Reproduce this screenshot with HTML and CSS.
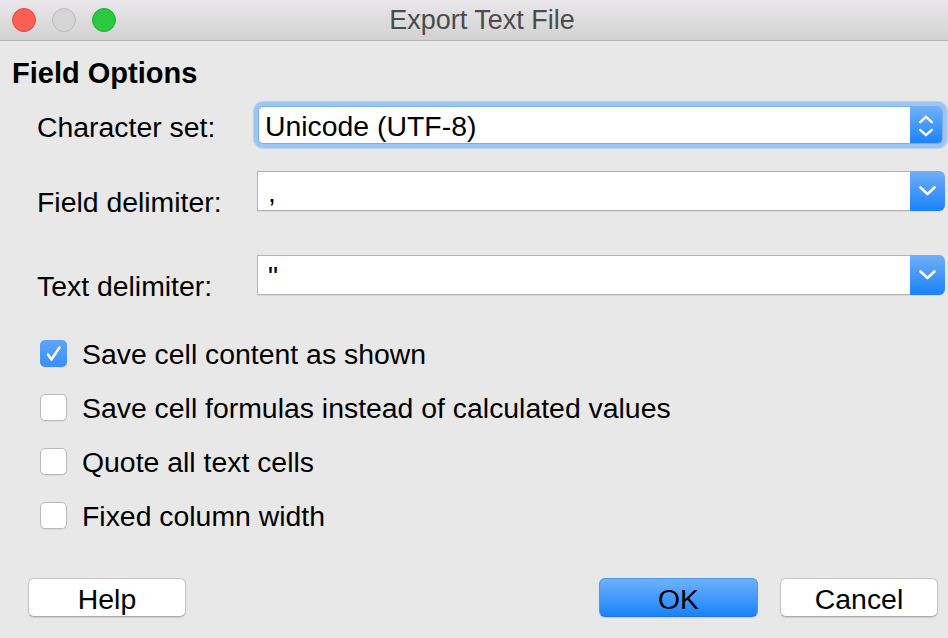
FILE: index.html
```html
<!DOCTYPE html>
<html lang="en">
<head>
<meta charset="utf-8">
<title>Export Text File</title>
<link rel="stylesheet" href="styles.css">
</head>
<body>
<div class="window">
  <header class="titlebar">
    <div class="lights">
      <span class="light close"></span>
      <span class="light min"></span>
      <span class="light zoom"></span>
    </div>
    <div class="title">Export Text File</div>
  </header>

  <main class="dialog">
    <h2 class="section">Field Options</h2>

    <div class="form">
      <div class="row row-charset">
        <label class="label">Character set:</label>
        <div class="select focused">
          <span class="value">Unicode (UTF-8)</span>
          <span class="stepper">
            <svg width="33" height="38" viewBox="0 0 33 38"><path d="M10.5 15 L16.5 9.5 L22.5 15" fill="none" stroke="#fff" stroke-width="2.4" stroke-linecap="round" stroke-linejoin="round"/><path d="M10.5 23 L16.5 28.5 L22.5 23" fill="none" stroke="#fff" stroke-width="2.4" stroke-linecap="round" stroke-linejoin="round"/></svg>
          </span>
        </div>
      </div>

      <div class="row row-combo">
        <label class="label">Field delimiter:</label>
        <div class="combo">
          <span class="value">,</span>
          <span class="arrow">
            <svg width="35" height="40" viewBox="0 0 35 40"><path d="M10.5 16.5 L17.5 23 L24.5 16.5" fill="none" stroke="#fff" stroke-width="2.6" stroke-linecap="round" stroke-linejoin="round"/></svg>
          </span>
        </div>
      </div>

      <div class="row row-combo row-last">
        <label class="label">Text delimiter:</label>
        <div class="combo">
          <span class="value">"</span>
          <span class="arrow">
            <svg width="35" height="40" viewBox="0 0 35 40"><path d="M10.5 16.5 L17.5 23 L24.5 16.5" fill="none" stroke="#fff" stroke-width="2.6" stroke-linecap="round" stroke-linejoin="round"/></svg>
          </span>
        </div>
      </div>
    </div>

    <ul class="checks">
      <li class="check">
        <span class="box checked">
          <svg width="27" height="27" viewBox="0 0 27 27"><path d="M8 14.5 L11.5 19.5 L19.5 7.5" fill="none" stroke="#fff" stroke-width="2.4" stroke-linecap="round" stroke-linejoin="round"/></svg>
        </span>
        <span class="check-text">Save cell content as shown</span>
      </li>
      <li class="check">
        <span class="box"></span>
        <span class="check-text">Save cell formulas instead of calculated values</span>
      </li>
      <li class="check">
        <span class="box"></span>
        <span class="check-text">Quote all text cells</span>
      </li>
      <li class="check">
        <span class="box"></span>
        <span class="check-text">Fixed column width</span>
      </li>
    </ul>

    <footer class="buttons">
      <button class="btn">Help</button>
      <span class="spacer"></span>
      <button class="btn primary">OK</button>
      <button class="btn">Cancel</button>
    </footer>
  </main>
</div>
</body>
</html>
```

FILE: styles.css
```css
* {
  box-sizing: border-box;
}

html, body {
  margin: 0;
  padding: 0;
}

body {
  width: 948px;
  height: 638px;
  overflow: hidden;
  background: #e8e8e8;
  font-family: "Liberation Sans", Arial, Helvetica, sans-serif;
  color: #000;
}

.window {
  display: flex;
  flex-direction: column;
  height: 638px;
}

/* Title bar */
.titlebar {
  position: relative;
  height: 41px;
  flex: 0 0 41px;
  background: linear-gradient(#e9e7e9, #d3d2d3);
  border-bottom: 1px solid #b6b5b6;
  display: flex;
  align-items: center;
  justify-content: center;
}

.lights {
  position: absolute;
  left: 12px;
  top: 8px;
  display: flex;
  gap: 16px;
}

.light {
  width: 24px;
  height: 24px;
  border-radius: 50%;
  display: block;
}

.light.close {
  background: #fd5f57;
  border: 1px solid #e2463f;
}

.light.min {
  background: #d6d5d6;
  border: 1px solid #bdbcbd;
}

.light.zoom {
  background: #2cc840;
  border: 1px solid #1fad2e;
}

.title {
  font-size: 27px;
  line-height: 30px;
  color: #4b4b4b;
  margin-left: 16px;
}

/* Dialog body */
.dialog {
  flex: 1;
  display: flex;
  flex-direction: column;
}

.section {
  margin: 16px 0 0 12px;
  font-size: 29px;
  line-height: 32px;
  font-weight: bold;
}

.form {
  margin-left: 37px;
  display: flex;
  flex-direction: column;
}

.row {
  display: flex;
}

.label {
  width: 220px;
  font-size: 28.4px;
  line-height: 32px;
}

.row-charset {
  margin-top: 17px;
  height: 38px;
  align-items: center;
}

.row-charset .label {
  padding-top: 3px;
}

.row-combo {
  margin-top: 27px;
  align-items: flex-start;
}

.row-combo .label {
  margin-top: 15px;
}

.row-last {
  margin-top: 37px;
}

.select,
.combo {
  display: flex;
  align-items: center;
  background: #fff;
  font-size: 28.4px;
}

.select {
  margin-left: 1px;
  width: 685px;
  height: 38px;
  border-radius: 5px;
  border: 1px solid #79aeec;
  box-shadow: 0 0 0 4px #9dc5f1, 0 0 1px 5px rgba(140, 185, 240, 0.5);
}

.select .value {
  flex: 1;
  padding-left: 6px;
  line-height: 36px;
  padding-top: 1px;
}

.stepper {
  width: 32px;
  height: 36px;
  display: flex;
  border-radius: 0 4px 4px 0;
  background: linear-gradient(#71b0f8, #1c83fb);
}

.combo {
  width: 688px;
  height: 40px;
  border: 1px solid #b3b3b3;
  border-right: none;
  border-radius: 0 6px 6px 0;
  box-shadow: 0 1px 0 rgba(0, 0, 0, 0.06);
}

.combo .value {
  flex: 1;
  padding-left: 10px;
  line-height: 38px;
  padding-top: 2px;
}

.arrow {
  width: 35px;
  height: 40px;
  margin-top: -1px;
  margin-bottom: -1px;
  display: flex;
  border-radius: 0 6px 6px 0;
  background: linear-gradient(#70aff8, #1a82fb);
}

/* Checkboxes */
.checks {
  list-style: none;
  margin: 24px 0 0 40px;
  padding: 0;
}

.check {
  height: 54px;
  display: flex;
  align-items: center;
}

.box {
  width: 27px;
  height: 27px;
  flex: 0 0 27px;
  border-radius: 5px;
  background: #fff;
  border: 1px solid #b9b9b9;
  box-shadow: 0 1px 0 rgba(0, 0, 0, 0.05);
  display: flex;
}

.box.checked {
  border: none;
  background: linear-gradient(#5da6f8, #3c8ff8);
}

.check-text {
  margin-left: 15px;
  font-size: 28.4px;
  line-height: 32px;
  padding-top: 1px;
}

/* Buttons */
.buttons {
  margin: 36px 10px 0 28px;
  display: flex;
  align-items: center;
}

.spacer {
  flex: 1;
}

.btn {
  width: 158px;
  height: 39px;
  padding: 3px 0 0;
  border-radius: 6px;
  border: 1px solid #c6c6c6;
  border-bottom-color: #adadad;
  background: #fff;
  font-family: "Liberation Sans", Arial, Helvetica, sans-serif;
  font-size: 28.4px;
  line-height: 33px;
  color: #000;
  box-shadow: 0 1px 1px rgba(0, 0, 0, 0.12);
}

.btn.primary {
  width: 159px;
  margin-right: 22px;
  border: 1px solid #4b97f5;
  border-bottom-color: #1d74e6;
  background: linear-gradient(#6db2fa, #1b82fb);
}
```
